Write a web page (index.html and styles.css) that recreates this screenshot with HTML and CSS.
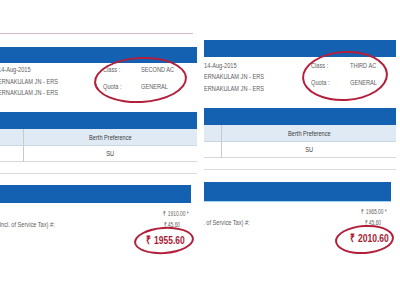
FILE: index.html
```html
<!DOCTYPE html>
<html lang="en">
<head>
    <meta charset="UTF-8">
    <title>Ticket comparison</title>
    <link rel="stylesheet" href="styles.css">
</head>
<body>

<div class="compare">
    <div class="panel panel-a">
        <div class="rule"></div>
        <div class="bar bar-top"></div>
        <div class="info">
            <div class="journey">
                <div class="t">14-Aug-2015</div>
                <div class="t">ERNAKULAM JN - ERS</div>
                <div class="t">ERNAKULAM JN - ERS</div>
            </div>
            <div class="k"><span class="t">Class :</span></div><div class="v"><span class="t">SECOND AC</span></div>
            <div class="k"><span class="t">Quota :</span></div><div class="v"><span class="t">GENERAL</span></div>
        </div>
        <div class="bar bar-mid"></div>
        <div class="berth">
            <div class="berth-head"><div class="cell-first"></div><div class="cell"><span class="t">Berth Preference</span></div></div>
            <div class="berth-row"><div class="cell-first"></div><div class="cell"><span class="t">SU</span></div></div>
        </div>
        <div class="sep"></div>
        <div class="bar bar-fare"></div>
        <div class="fare">
            <div class="fare-row"><div class="fare-label"></div><div class="amount"><span class="t">₹ 1910.00 *</span></div></div>
            <div class="fare-row"><div class="fare-label"><span class="t">Service Charges (Incl. of Service Tax) #:</span></div><div class="amount amount-sc"><span class="t">₹ 45.60</span></div></div>
            <div class="total"><span class="t">₹ 1955.60</span></div>
        </div>
        <div class="ring ring-class"></div>
        <div class="ring ring-total"></div>
    </div>

    <div class="panel panel-b">
        <div class="bar bar-top"></div>
        <div class="info">
            <div class="journey">
                <div class="t">14-Aug-2015</div>
                <div class="t">ERNAKULAM JN - ERS</div>
                <div class="t">ERNAKULAM JN - ERS</div>
            </div>
            <div class="k"><span class="t">Class :</span></div><div class="v"><span class="t">THIRD AC</span></div>
            <div class="k"><span class="t">Quota :</span></div><div class="v"><span class="t">GENERAL</span></div>
        </div>
        <div class="bar bar-mid"></div>
        <div class="berth">
            <div class="berth-head"><div class="cell-first"></div><div class="cell"><span class="t">Berth Preference</span></div></div>
            <div class="berth-row"><div class="cell-first"></div><div class="cell"><span class="t">SU</span></div></div>
        </div>
        <div class="sep"></div>
        <div class="bar bar-fare"></div>
        <div class="fare">
            <div class="fare-row"><div class="fare-label"></div><div class="amount"><span class="t">₹ 1965.00 *</span></div></div>
            <div class="fare-row"><div class="fare-label"><span class="t">Service Charges (Incl. of Service Tax) #:</span></div><div class="amount amount-sc"><span class="t">₹ 45.60</span></div></div>
            <div class="total"><span class="t">₹ 2010.60</span></div>
        </div>
        <div class="ring ring-class"></div>
        <div class="ring ring-total"></div>
    </div>
</div>

</body>
</html>
```

FILE: styles.css
```css
body {
    margin: 0;
    padding: 0;
    background-color: #ffffff;
    font-family: "Liberation Sans", Arial, sans-serif;
    color: #5e5e5e;
}
.compare {
    display: flex;
    width: 400px;
    height: 300px;
    overflow: hidden;
}
.panel {
    position: relative;
    overflow: hidden;
    height: 300px;
}
.panel-a {
    width: 197px;
}
.panel-b {
    width: 192px;
    margin-left: 7px;
}
/* screenshot text is squeezed sideways */
.t {
    display: inline-block;
    white-space: nowrap;
    transform: scaleX(0.75);
    transform-origin: left center;
}
.rule {
    margin-top: 33px;
    width: 193px;
    height: 1px;
    background-color: #d3b9c6;
}
.bar {
    background-color: #1561b1;
}
.panel-a .bar-top {
    margin-top: 13px;
    height: 16px;
}
.panel-b .bar-top {
    margin-top: 40px;
    height: 17px;
}
.info {
    display: grid;
    font-size: 7.5px;
    line-height: 11.5px;
}
.journey .t {
    display: block;
}
.panel-a .info {
    padding-top: 1px;
    margin-left: -2px;
    grid-template-columns: 105px 38px 1fr;
}
.panel-b .info {
    padding-top: 2.5px;
    grid-template-columns: 107px 39px 1fr;
}
.journey {
    grid-row: 1 / span 2;
    white-space: nowrap;
}
.k, .v {
    white-space: nowrap;
}
.bar-mid {
    height: 17px;
}
.panel-a .bar-mid {
    margin-top: 13.5px;
}
.panel-b .bar-mid {
    margin-top: 14px;
}
.berth {
    font-size: 7.5px;
    color: #3c3c3c;
}
.berth-head, .berth-row {
    display: flex;
    align-items: stretch;
}
.berth-head {
    height: 16px;
    background-color: #dfeaf5;
    border-bottom: 1px solid #c9d6e4;
}
.berth-row {
    height: 15px;
    border-bottom: 1px solid #d6d6d6;
}
.cell-first {
    border-right: 1px solid #c9c9c9;
}
.panel-a .cell-first {
    width: 23px;
}
.panel-b .cell-first {
    width: 17px;
}
.cell {
    flex: 1;
    display: flex;
    align-items: center;
    justify-content: center;
}
.cell .t {
    transform-origin: center;
}
.sep {
    margin-top: 11px;
    height: 1px;
    background-color: #dcdcdc;
}
.panel-a .bar-fare {
    margin-top: 11px;
    height: 18px;
    width: 191px;
}
.panel-b .bar-fare {
    margin-top: 12px;
    height: 19px;
    width: 187px;
    border-bottom: 1px solid #9fd4ee;
}
.fare {
    font-size: 6.5px;
    line-height: 11px;
    padding-top: 5px;
}
.panel-b .fare {
    padding-top: 4px;
}
.fare-row {
    display: flex;
    justify-content: space-between;
    white-space: nowrap;
}
.fare-row .amount .t, .total .t {
    transform-origin: right center;
}
.fare-label {
    display: flex;
    justify-content: flex-end;
    font-size: 7.5px;
}
.fare-label .t {
    transform-origin: right center;
}
.panel-a .fare-label {
    width: 55px;
}
.panel-b .fare-label {
    width: 46px;
}
.panel-a .amount {
    margin-right: 8px;
}
.panel-b .amount {
    margin-right: 9px;
}
.panel-a .amount-sc {
    margin-right: 17px;
}
.panel-b .amount-sc {
    margin-right: 15px;
}
.total {
    text-align: right;
    font-size: 11.5px;
    font-weight: bold;
    line-height: 14px;
    color: #a81b33;
    margin-top: 3px;
}
.total .t {
    transform: scaleX(0.74);
}
.panel-a .total {
    margin-right: 12px;
}
.panel-b .total {
    margin-right: 7px;
}
.ring {
    position: absolute;
    border: 2.5px solid #b31f3a;
    border-radius: 50%;
    box-sizing: border-box;
}
.panel-a .ring-class {
    left: 94px;
    top: 57px;
    width: 93px;
    height: 46px;
    transform: rotate(-3deg);
}
.panel-b .ring-class {
    left: 98px;
    top: 51px;
    width: 86px;
    height: 50px;
    transform: rotate(-3deg);
}
.panel-a .ring-total {
    left: 134px;
    top: 227px;
    width: 60px;
    height: 27px;
    transform: rotate(-4deg);
}
.panel-b .ring-total {
    left: 131px;
    top: 225px;
    width: 59px;
    height: 29px;
    transform: rotate(-4deg);
}
```
